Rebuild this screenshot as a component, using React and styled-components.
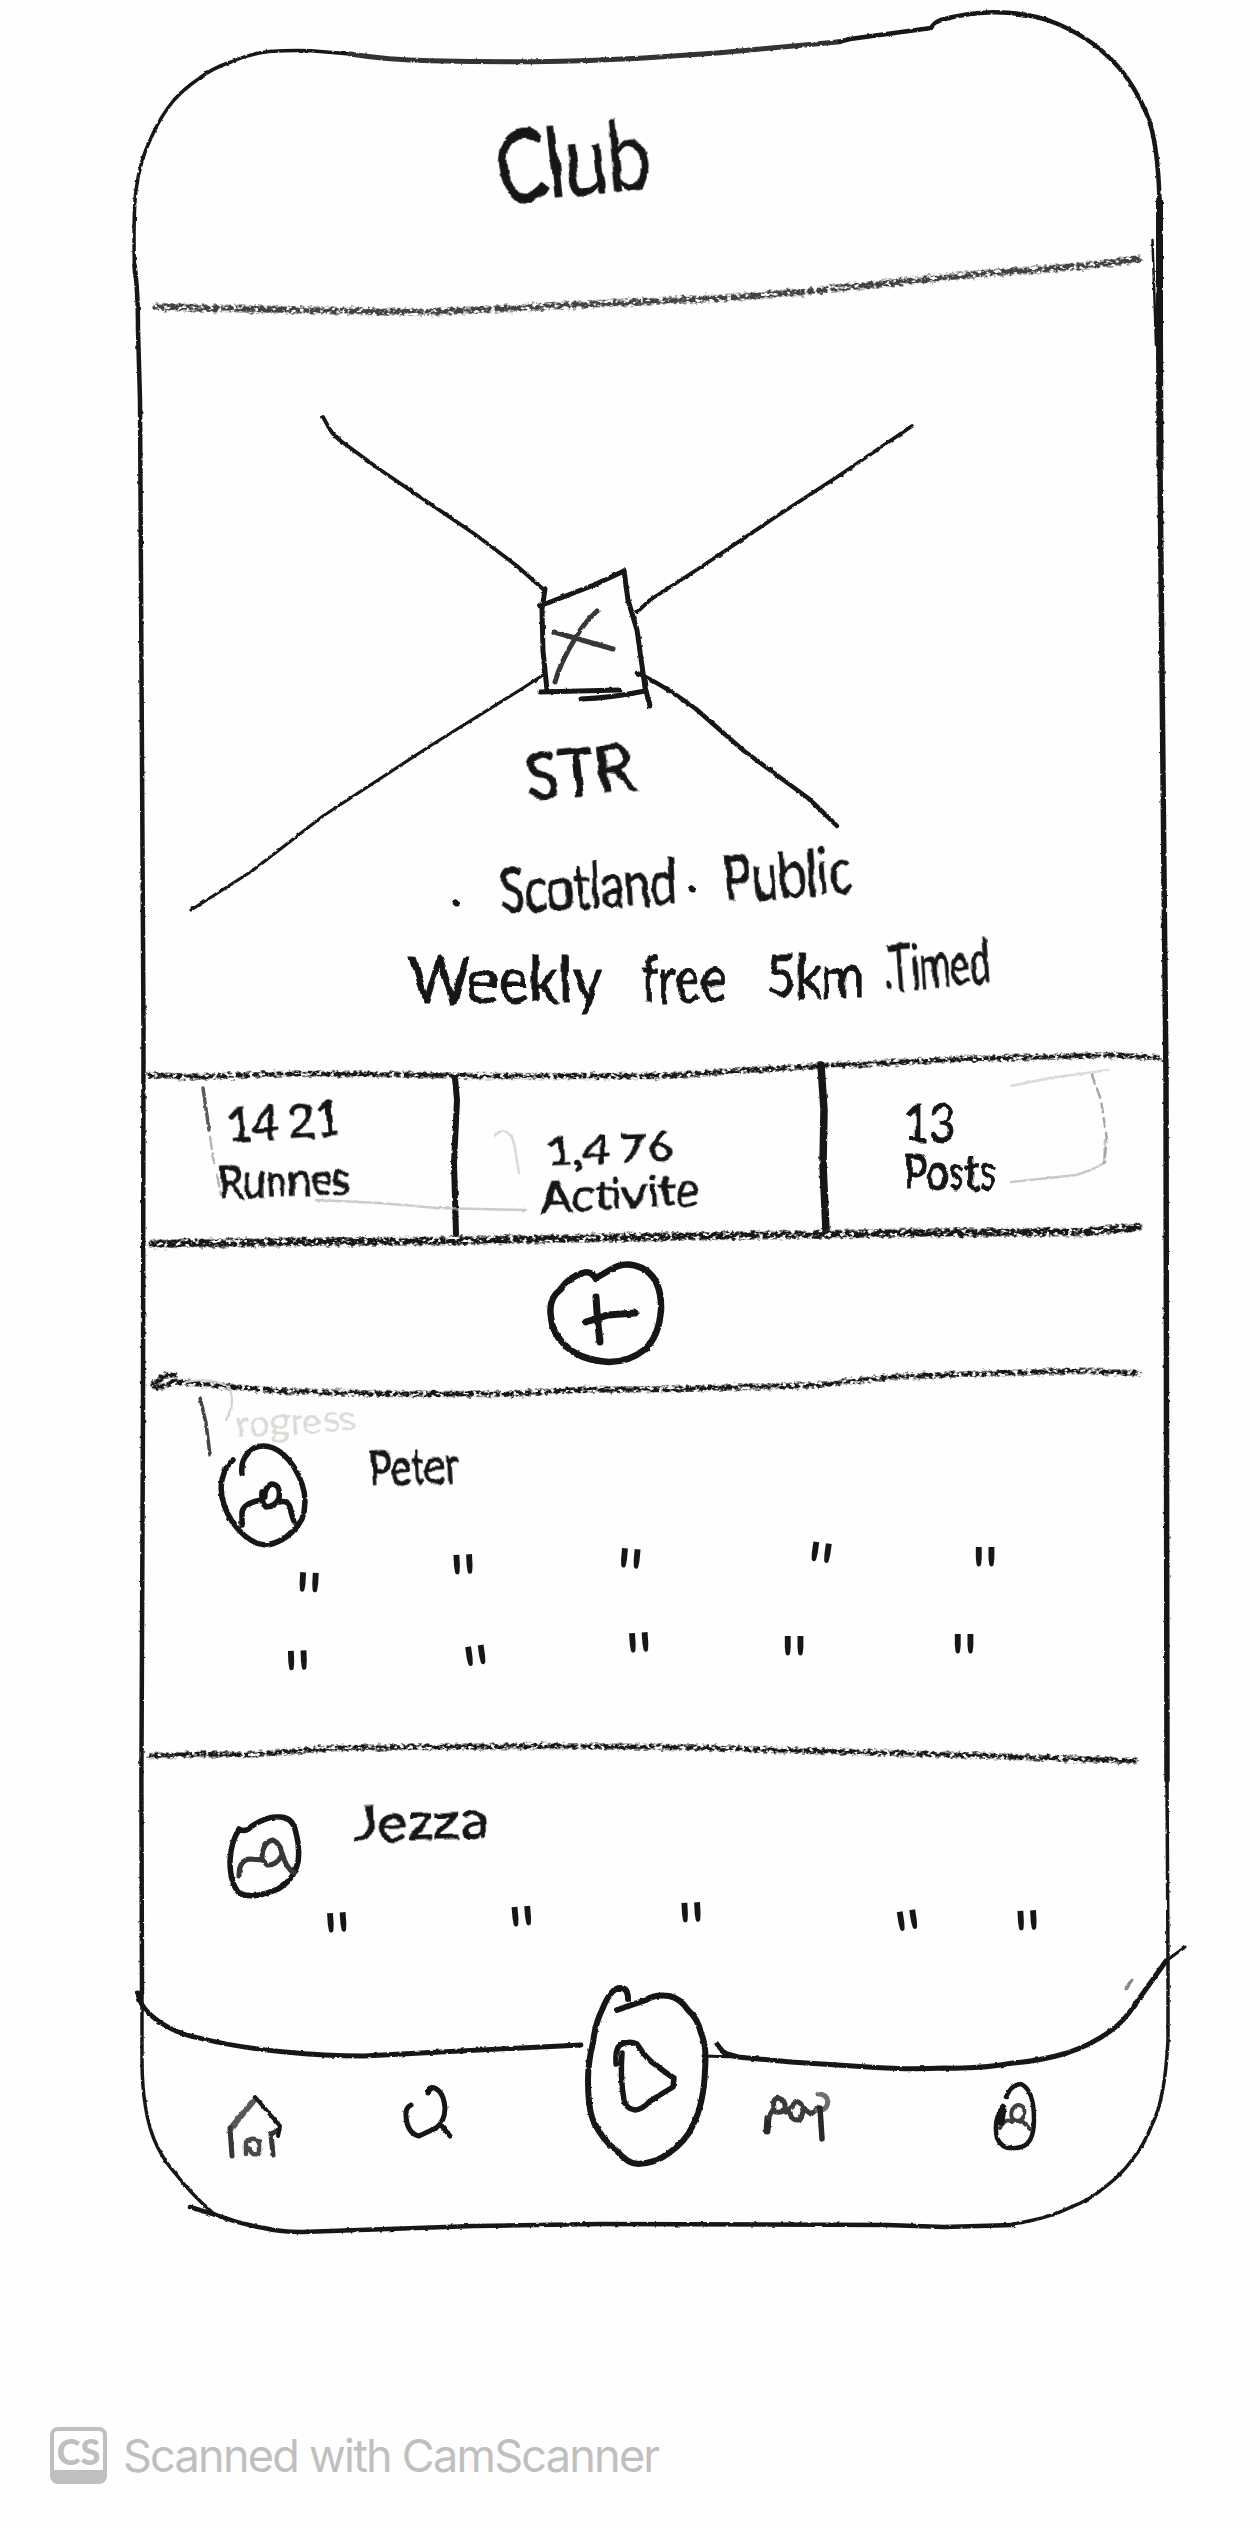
import React from "react";
import styled, { createGlobalStyle } from "styled-components";

const INK = "#171517";
const PENCIL = "#4a484b";

const GlobalStyle = createGlobalStyle`
  body { margin: 0; background: #fefefe; }
  * { box-sizing: border-box; }
`;

const Page = styled.div`
  position: relative;
  width: 1260px;
  height: 2528px;
  overflow: hidden;
  display: flex;
  flex-direction: column;
  background: #fefefe;
  color: ${INK};
  font-family: Lato, "Liberation Sans", sans-serif;
`;

const FilterDefs = styled.svg`
  position: absolute;
  width: 0;
  height: 0;
`;

const Drawing = styled.svg`
  display: block;
  flex: none;
  overflow: visible;
  fill: none;
  stroke: ${INK};
  stroke-linecap: round;
  stroke-linejoin: round;
  margin-left: ${(p) => p.$gap || 0}px;
  margin-top: ${(p) => p.$drop || 0}px;
`;

const FrameDrawing = styled(Drawing)`
  position: absolute;
  inset: 0;
  pointer-events: none;
`;

function Sketch({ box, gap, drop, texture = "pen", as: Tag = Drawing, children }) {
  return (
    <Tag
      $gap={gap}
      $drop={drop}
      width={box[2]}
      height={box[3]}
      viewBox={box.join(" ")}
      aria-hidden="true"
    >
      <g filter={`url(#${texture})`}>{children}</g>
    </Tag>
  );
}

const Word = styled.span`
  display: block;
  flex: none;
  width: ${(p) => p.$w}px;
  height: ${(p) => p.$size}px;
  margin-left: ${(p) => p.$gap || 0}px;
  margin-top: ${(p) => p.$drop || 0}px;
  font-size: ${(p) => p.$size}px;
  line-height: 1;
  white-space: nowrap;
  color: ${(p) => p.$color || INK};
  -webkit-text-stroke: ${(p) => (p.$color ? 0 : 1)}px ${INK};
  transform-origin: left 88%;
  transform: rotate(${(p) => p.$tilt || 0}deg) scaleX(${(p) => p.$sx || 1});
  filter: url(#hand);
`;

const Line = styled.div`
  display: flex;
  align-items: flex-start;
  height: ${(p) => p.$h}px;
`;

const Header = styled.header`
  display: flex;
  align-items: flex-start;
  height: 250px;
  padding: 117px 0 0 499px;
`;

const Hero = styled.section`
  display: grid;
  height: 730px;
`;

const HeroArt = styled.div`
  grid-area: 1 / 1;
`;

const HeroCopy = styled.div`
  grid-area: 1 / 1;
  display: flex;
  flex-direction: column;
  padding-top: 417px;
`;

const Stats = styled.section`
  display: flex;
  height: 138px;
`;

const Stat = styled.div`
  display: flex;
  flex-direction: column;
  flex: none;
  width: ${(p) => p.$w}px;
  padding-top: ${(p) => p.$top}px;
  padding-left: ${(p) => p.$left}px;
`;

const AddRow = styled.div`
  display: flex;
  height: 118px;
  padding: 12px 0 0 546px;
`;

const Post = styled.article`
  display: flex;
  flex-direction: column;
  height: ${(p) => p.$h}px;
  padding-top: ${(p) => p.$top}px;
`;

const Ditto = styled.span`
  display: block;
  flex: none;
  width: 30px;
  height: 46px;
  margin-left: ${(p) => p.$gap}px;
  margin-top: ${(p) => p.$drop}px;
  font-size: 76px;
  line-height: 46px;
  text-align: center;
  transform: rotate(${(p) => p.$tilt}deg);
`;

const Nav = styled.nav`
  display: grid;
  height: 265px;
`;

const NavArt = styled.div`
  grid-area: 1 / 1;
`;

const NavItems = styled.div`
  grid-area: 1 / 1;
  display: flex;
  align-items: flex-start;
`;

const Credit = styled.footer`
  display: flex;
  align-items: center;
  gap: 16px;
  margin-top: 177px;
  padding-left: 50px;
  color: #bfbfbf;
`;

const Badge = styled.div`
  display: flex;
  justify-content: center;
  width: 57px;
  height: 57px;
  padding-top: 2px;
  border: 4px solid #bfbfbf;
  border-bottom-width: 14px;
  border-radius: 8px;
  font: 900 36px/36px Lato, sans-serif;
`;

const CreditText = styled.span`
  font: 400 45px/57px Inter, sans-serif;
  letter-spacing: -1.75px;
  white-space: nowrap;
`;

function Filters() {
  return (
    <FilterDefs aria-hidden="true">
      <defs>
        <filter id="hand" x="-10%" y="-20%" width="120%" height="140%" colorInterpolationFilters="sRGB">
          <feTurbulence type="fractalNoise" baseFrequency="0.045" numOctaves="2" seed="4" result="n" />
          <feDisplacementMap in="SourceGraphic" in2="n" scale="9" xChannelSelector="R" yChannelSelector="G" />
        </filter>
        <filter id="pen" filterUnits="userSpaceOnUse" x="0" y="0" width="1260" height="2528" colorInterpolationFilters="sRGB">
          <feTurbulence type="fractalNoise" baseFrequency="0.2" numOctaves="2" seed="2" result="n" />
          <feDisplacementMap in="SourceGraphic" in2="n" scale="2.5" xChannelSelector="R" yChannelSelector="G" />
        </filter>
        <filter id="pencil" filterUnits="userSpaceOnUse" x="0" y="0" width="1260" height="2528" colorInterpolationFilters="sRGB">
          <feTurbulence type="fractalNoise" baseFrequency="0.22 0.3" numOctaves="2" seed="9" result="n" />
          <feDisplacementMap in="SourceGraphic" in2="n" scale="6" xChannelSelector="R" yChannelSelector="G" result="rough" />
          <feColorMatrix in="n" type="matrix" values="0 0 0 0 0  0 0 0 0 0  0 0 0 0 0  0 0 6 0 -1.9" result="grain" />
          <feComposite in="rough" in2="grain" operator="in" />
        </filter>
      </defs>
    </FilterDefs>
  );
}

function Rule({ box, d, width = 5, tone = 1 }) {
  return (
    <Sketch box={box} texture="pencil">
      <path d={d} stroke={PENCIL} strokeOpacity={tone * 0.7} strokeWidth={width} />
      <path d={d} strokeOpacity={tone} strokeWidth={width - 2.5} />
    </Sketch>
  );
}

const firstRow = [[308, 30, 3], [464, 12, -3], [629, 6, 5], [819, 0, 8], [985, 4, 0]];
const secondRow = [[298, 18, -2], [478, 13, -8], [640, 0, -4], [794, 3, 0], [964, 1, 0]];
const thirdRow = [[338, 10, -4], [523, 4, -5], [692, 0, -3], [910, 8, -9], [1028, 8, -3]];

function DittoLine({ marks, height }) {
  return (
    <Line $h={height}>
      {marks.map(([x, drop, tilt], i) => (
        <Ditto key={x} $gap={i ? x - marks[i - 1][0] - 30 : x - 15} $drop={drop} $tilt={tilt}>
          {'"'}
        </Ditto>
      ))}
    </Line>
  );
}

function PhoneFrame() {
  return (
    <Sketch as={FrameDrawing} box={[0, 0, 1260, 2528]}>
      <path strokeWidth="3.5" d="M134.5 273C134 247 133 215 136 190Q140 160 151 138Q160 117 174 100Q184 89 197 80Q212 68 231 62Q249 54 269 51.5Q290 50 311 50.7L350 54" />
      <path strokeWidth="5" stroke="#343235" d="M350 54Q388 60 430 60.7Q480 62 533 61.7Q590 61 644 58L720 52.7L840 41.7" />
      <path strokeWidth="4.5" d="M840 41.7L850 39L931 28Q935 22 941 20Q966 13 993 12.3Q1030 12 1058 24Q1076 32 1092 43Q1112 58 1125 75Q1143 101 1150 123Q1158 150 1159.5 200" />
      <path strokeWidth="7" strokeLinecap="butt" d="M1159.5 200V330L1160 470" />
      <path strokeWidth="2.5" d="M1152.5 240L1156 345" />
      <path strokeWidth="5.5" d="M1160 465Q1163 800 1166 1080L1167 1780" />
      <path strokeWidth="3.5" d="M1167 1780L1168 1960V2040Q1166 2075 1162 2093Q1159 2111 1151 2127Q1144 2145 1132 2160Q1120 2176 1105 2187Q1090 2200 1071 2207Q1050 2218 1013 2224" />
      <path strokeWidth="4.5" d="M1013 2225L944 2227L887 2225L600 2224L474 2226L302 2232Q280 2232 264 2228Q240 2224 216 2215L190 2207" />
      <path strokeWidth="4.5" d="M134.5 265Q138 290 138 330L140 400L143.5 1030L143 1410L141.4 1780L142 1993" />
      <path strokeWidth="3.5" d="M142 1990V2060Q142 2086 145.5 2107Q149 2130 157.5 2147Q165 2162 175 2173Q190 2193 214 2214" />
    </Sketch>
  );
}

export default function App() {
  return (
    <Page>
      <GlobalStyle />
      <Filters />
      <Header>
        <Word $w={152} $size={98} $sx={0.78} $tilt={-6}>Club</Word>
      </Header>
      <Rule
        box={[0, 250, 1260, 70]}
        width={8}
        tone={0.7}
        d="M156 307L254 309Q330 311 426 312Q490 310 552 306L720 298Q800 293 870 285L1000 272Q1080 268 1138 259"
      />

      <Hero>
        <HeroArt>
          <Sketch box={[0, 320, 1260, 730]}>
            <g strokeWidth="3.8">
              <path d="M323 417L329 428Q334 437 345 444L379 469L476 535L517 566L543 589" />
              <path d="M912 426L840 475L777 516L701 567L650 600L637 612" />
              <path d="M543 675L520 690L430 746L323 816L252 871L191 910" strokeWidth="3.2" />
              <path d="M637 673Q662 684 696 709L744 751L808 798Q825 814 837 826" strokeWidth="4.5" />
            </g>
            <g strokeWidth="5">
              <path d="M545 589L542 610L543 651L547 690" />
              <path d="M540 606L594 585L624 571" />
              <path d="M624 571L628 600L637 630L645 687L650 706" />
              <path d="M540 692L619 690M581 699Q610 698 645 691" />
              <path d="M597 611Q583 624 576 637Q560 663 555 682M554 632L613 649" stroke="#39363a" />
            </g>
          </Sketch>
        </HeroArt>
        <HeroCopy>
          <Line $h={103}>
            <Word $gap={527} $drop={6} $w={108} $size={66} $sx={0.95} $tilt={-6}>STR</Word>
          </Line>
          <Line $h={92}>
            <Word $gap={449} $drop={18} $w={14} $size={58}>.</Word>
            <Word $gap={37} $drop={18} $w={170} $size={62} $sx={0.76} $tilt={-3}>Scotland</Word>
            <Word $gap={15} $drop={4} $w={16} $size={58}>.</Word>
            <Word $gap={23} $drop={6} $w={124} $size={64} $sx={0.76} $tilt={-4}>Public</Word>
          </Line>
          <Line $h={100}>
            <Word $gap={409} $drop={15} $w={190} $size={64} $sx={0.92}>Weekly</Word>
            <Word $gap={42} $drop={12} $w={84} $size={66} $sx={0.74}>free</Word>
            <Word $gap={41} $drop={14} $w={94} $size={58} $sx={0.88}>5km</Word>
            <Word $gap={24} $drop={4} $w={106} $size={62} $sx={0.6} $tilt={-4}>.Timed</Word>
          </Line>
        </HeroCopy>
      </Hero>

      <Rule
        box={[0, 1050, 1260, 34]}
        width={6.5}
        d="M149 1075L199 1077L268 1074L371 1074L474 1076L661 1076L801 1067L961 1059L1115 1055L1158 1058"
      />
      <Stats>
        <Stat $w={451} $top={17} $left={219}>
          <Line $h={56}>
            <Word $gap={9} $w={109} $size={48} $sx={0.92} $tilt={-4}>14 21</Word>
          </Line>
          <Word $drop={2} $w={130} $size={46} $sx={0.88} $tilt={-2}>Runnes</Word>
        </Stat>
        <Sketch box={[451, 1084, 10, 138]}>
          <path d="M455 1078L457 1100L454 1163L456 1234" strokeWidth="6" />
          <g stroke="#b7b5b1" strokeWidth="2.5">
            <path d="M203 1088L209 1130" stroke="#5b595b" strokeWidth="3.5" />
            <path d="M210 1137L214 1163M217 1175L221 1195" strokeDasharray="12 5" />
            <path d="M316 1200L380 1203L437 1208L526 1210" strokeOpacity="0.7" />
            <path d="M495 1135Q508 1125 514 1143L519 1173" strokeOpacity="0.5" />
          </g>
        </Sketch>
        <Stat $w={358} $top={46} $left={80}>
          <Line $h={42}>
            <Word $gap={6} $w={129} $size={41} $sx={1.1} $tilt={-2}>1,4 76</Word>
          </Line>
          <Word $drop={4} $w={162} $size={42} $sx={1.12} $tilt={-3}>Activite</Word>
        </Stat>
        <Sketch box={[819, 1084, 10, 138]}>
          <path d="M821 1065L824 1110L823 1165L826 1230" strokeWidth="7.5" />
          <g stroke="#a9a4a9" strokeWidth="2.5">
            <path d="M1011 1086L1050 1078L1108 1070" strokeOpacity="0.4" />
            <path d="M1092 1075L1101 1100L1107 1140L1104 1163" strokeDasharray="9 6" />
            <path d="M1105 1140L1104 1163Q1094 1170 1076 1175L1011 1182" strokeOpacity="0.6" />
          </g>
        </Sketch>
        <Stat $w={300} $top={11} $left={75}>
          <Line $h={46}>
            <Word $w={50} $size={53} $sx={0.82}>13</Word>
          </Line>
          <Word $drop={5} $w={91} $size={50} $sx={0.78}>Posts</Word>
        </Stat>
      </Stats>
      <Rule
        box={[0, 1222, 1260, 28]}
        width={9}
        d="M152 1244L285 1242L440 1241L640 1237L908 1233L1086 1232L1138 1227"
      />

      <AddRow>
        <Sketch box={[544, 1262, 120, 104]}>
          <path strokeWidth="6.5" d="M594 1279Q589 1270 581 1273Q568 1276 558 1290Q546 1299 549 1317Q550 1333 562 1344Q576 1360 607 1362Q627 1362 642 1350Q657 1337 659 1310Q660 1278 640 1268Q623 1260 608 1270L594 1278" />
          <path strokeWidth="7" d="M594 1297Q595 1320 598 1342M584 1322L606 1315L633 1313" />
        </Sketch>
      </AddRow>
      <Rule
        box={[0, 1368, 1260, 32]}
        width={6.5}
        d="M175 1375Q164 1374 158 1381Q150 1385 157 1387Q167 1387 172 1381L200 1384L278 1391L388 1394L509 1394L578 1390L670 1389L819 1385L890 1377L1069 1371L1138 1373"
      />

      <Post $h={342} $top={0}>
        <Line $h={43}>
          <Sketch box={[196, 1400, 36, 60]} gap={196}>
            <path d="M200 1398L206 1423L210 1455" strokeWidth="3.5" stroke="#444" />
            <path d="M186 1382Q212 1377 228 1387Q237 1400 226 1420" strokeWidth="2" stroke="#d2d0cb" />
          </Sketch>
          <Word $gap={4} $drop={4} $w={122} $size={38} $sx={1} $tilt={-3} $color="#dcdad6">rogress</Word>
        </Line>
        <Line $h={102}>
          <Sketch box={[216, 1443, 94, 102]} gap={216}>
            <path strokeWidth="5.5" d="M242 1474Q240 1457 254 1448Q268 1442 283 1454Q296 1466 302 1484Q308 1501 302 1519Q290 1540 268 1545Q249 1545 233 1523Q218 1500 222 1480Q225 1467 233 1460" />
            <path strokeWidth="5.5" d="M242 1525V1512Q244 1503 261 1500Q266 1495 262 1492Q261 1502 266 1507Q276 1506 279 1498Q281 1484 271 1484Q264 1489 265 1497M279 1502Q290 1499 291 1512L294 1522" />
          </Sketch>
          <Word $gap={60} $drop={0} $w={88} $size={50} $sx={0.76} $tilt={-3}>Peter</Word>
        </Line>
        <DittoLine marks={firstRow} height={90} />
        <DittoLine marks={secondRow} height={90} />
      </Post>
      <Rule
        box={[0, 1742, 1260, 22]}
        width={6.5}
        d="M150 1756L199 1754L244 1755L337 1748L543 1746L670 1747L819 1751L961 1755L1135 1761"
      />

      <Post $h={221} $top={48}>
        <Line $h={90}>
          <Sketch box={[226, 1812, 78, 90]} gap={226}>
            <path strokeWidth="5.5" d="M239 1829Q245 1833 252 1826Q267 1816 278 1817Q293 1816 296 1833Q300 1847 298 1862Q294 1880 278 1889Q252 1900 239 1893Q230 1883 230 1861Q231 1841 239 1830" />
            <path strokeWidth="5" stroke="#39363a" d="M239 1876Q239 1860 250 1859L262 1860Q262 1842 273 1840Q281 1844 282 1855Q276 1866 267 1865L262 1859M282 1853Q286 1868 294 1873" />
          </Sketch>
          <Word $gap={50} $drop={-14} $w={137} $size={50} $sx={1.16} $tilt={-2}>Jezza</Word>
        </Line>
        <Line $h={3} />
        <DittoLine marks={thirdRow} height={70} />
      </Post>

      <Nav>
        <NavArt>
          <Sketch box={[0, 1985, 1260, 265]}>
            <path strokeWidth="4.8" d="M138 1993Q139 2008 161 2023Q178 2034 199 2038Q240 2048 285 2052Q325 2056 364 2056L440 2052L581 2045" />
            <path strokeWidth="5" d="M717 2044L724 2053L738 2057L791 2062L868 2067Q910 2070 944 2068Q980 2069 1013 2063Q1040 2061 1067 2053Q1091 2045 1109 2032Q1123 2023 1136 2003L1166 1961" />
            <path strokeWidth="3" d="M1166 1961L1185 1947M703 2056L738 2057" />
            <path strokeWidth="3" stroke="#8d898b" d="M1132 1980L1126 1989" />
          </Sketch>
        </NavArt>
        <NavItems>
          <Sketch box={[226, 2092, 60, 70]} gap={226} drop={107}>
            <path strokeWidth="6" stroke="#5a575b" d="M231 2128L255 2099" />
            <path strokeWidth="5" stroke="#39363a" d="M232 2156L230 2128M273 2155L271 2134L279 2130" />
            <path strokeWidth="4" d="M255 2097L280 2126L278 2136" />
            <path strokeWidth="4.5" stroke="#4a484b" d="M246 2154V2142Q252 2136 259 2141L259 2153Q252 2157 250 2149" />
          </Sketch>
          <Sketch box={[402, 2084, 52, 58]} gap={116} drop={99}>
            <path strokeWidth="5" d="M411 2105Q405 2108 406 2116Q407 2133 419 2136L436 2128Q445 2121 445 2108Q444 2096 439 2091Q430 2083 428 2093M441 2125L450 2136" />
          </Sketch>
          <Sketch box={[585, 1985, 124, 184]} gap={131} drop={0}>
            <path strokeWidth="6" d="M628 1999Q628 1988 621 1988Q611 1987 602 2010Q595 2024 593 2043Q588 2062 588 2080Q588 2107 593 2120Q602 2140 617 2151Q628 2164 638 2164Q656 2163 669 2153Q686 2141 692 2127Q704 2104 705 2070Q707 2046 701 2033Q698 2019 688 2010Q680 1998 669 1996Q655 1994 646 2000L617 2010" />
            <path strokeWidth="5.5" d="M616 2064Q615 2049 620 2045Q629 2040 637 2044Q647 2060 656 2065Q667 2074 674 2078L673 2087L650 2101Q642 2110 635 2110Q626 2109 624 2100Q620 2078 622 2053" />
          </Sketch>
          <Sketch box={[762, 2092, 70, 52]} gap={53} drop={107}>
            <path strokeWidth="7" stroke="#29272a" d="M767 2131L768 2118" />
            <path strokeWidth="5" stroke="#3c393d" d="M768 2118L774 2108Q772 2099 778 2098Q786 2100 785 2108Q783 2113 776 2112M786 2112L793 2106Q795 2098 801 2104Q806 2112 799 2120Q791 2121 790 2112M803 2108L811 2114L818 2108" />
            <path strokeWidth="5" stroke="#706c71" d="M818 2094Q827 2094 828 2102Q826 2112 817 2110" />
            <path strokeWidth="5.5" stroke="#29272a" d="M820 2108L822 2139" />
          </Sketch>
          <Sketch box={[992, 2082, 44, 68]} gap={160} drop={97}>
            <path strokeWidth="4.5" d="M1006 2097Q1012 2084 1021 2084Q1034 2090 1034 2119Q1034 2144 1021 2147Q1003 2152 997 2138Q993 2120 1003 2106" />
            <path strokeWidth="4" stroke="#403d41" d="M1012 2110Q1018 2101 1024 2108Q1026 2119 1018 2121Q1009 2120 1012 2110M1000 2128Q1006 2117 1012 2122M1022 2121L1030 2129" />
            <path strokeWidth="7" d="M1003 2108L1001 2122" />
          </Sketch>
        </NavItems>
      </Nav>

      <Credit>
        <Badge>CS</Badge>
        <CreditText>Scanned with CamScanner</CreditText>
      </Credit>
      <PhoneFrame />
    </Page>
  );
}
